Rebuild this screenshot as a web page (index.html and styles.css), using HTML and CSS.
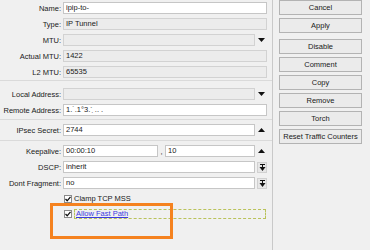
FILE: index.html
```html
<!DOCTYPE html>
<html lang="en">
<head>
    <meta charset="UTF-8">
    <title>Interface &lt;ipip-to-&gt;</title>
    <link rel="stylesheet" href="styles.css">
</head>
<body>
    <div class="window">
        <div class="form">
            <div class="section first">
                <div class="row"><span class="label">Name:</span><div class="field"><div class="box">ipip-to-</div></div></div>
                <div class="row"><span class="label">Type:</span><div class="field"><div class="box off">IP Tunnel</div></div></div>
                <div class="row"><span class="label">MTU:</span><div class="field"><div class="box off"></div><span class="ctl"><svg width="7" height="4" viewBox="0 0 7 4"><polygon points="0,0 7,0 3.5,4" fill="#111"/></svg></span></div></div>
                <div class="row"><span class="label">Actual MTU:</span><div class="field"><div class="box off">1422</div></div></div>
                <div class="row"><span class="label">L2 MTU:</span><div class="field"><div class="box off">65535</div></div></div>
            </div>
            <div class="section second">
                <div class="row"><span class="label">Local Address:</span><div class="field"><div class="box off"></div><span class="ctl"><svg width="7" height="4" viewBox="0 0 7 4"><polygon points="0,0 7,0 3.5,4" fill="#111"/></svg></span></div></div>
                <div class="row"><span class="label">Remote Address:</span><div class="field"><div class="box">1.&#729;.1&#176;3.&#180; &#803;.. .</div></div></div>
            </div>
            <div class="section third">
                <div class="row"><span class="label">IPsec Secret:</span><div class="field"><div class="box">2744</div><span class="ctl"><svg width="7" height="4" viewBox="0 0 7 4"><polygon points="0,4 7,4 3.5,0" fill="#111"/></svg></span></div></div>
            </div>
            <div class="section fourth">
                <div class="row"><span class="label">Keepalive:</span><div class="field"><div class="box short">00:00:10</div><span class="comma">,</span><div class="box">10</div><span class="ctl"><svg width="7" height="4" viewBox="0 0 7 4"><polygon points="0,4 7,4 3.5,0" fill="#111"/></svg></span></div></div>
                <div class="row"><span class="label">DSCP:</span><div class="field"><div class="box">inherit</div><span class="ctl btn"><svg width="7" height="7" viewBox="0 0 7 7"><rect x="1" y="0" width="5" height="1" fill="#111"/><rect x="3" y="1" width="1" height="3" fill="#111"/><polygon points="0.5,3 6.5,3 3.5,7" fill="#111"/></svg></span></div></div>
                <div class="row"><span class="label">Dont Fragment:</span><div class="field"><div class="box">no</div><span class="ctl btn"><svg width="7" height="7" viewBox="0 0 7 7"><rect x="1" y="0" width="5" height="1" fill="#111"/><rect x="3" y="1" width="1" height="3" fill="#111"/><polygon points="0.5,3 6.5,3 3.5,7" fill="#111"/></svg></span></div></div>
                <div class="check-row"><span class="check"><svg width="6" height="6" viewBox="0 0 6 6"><polyline points="0.5,3 2.2,4.8 5.5,0.8" fill="none" stroke="#111" stroke-width="1.3"/></svg></span><span>Clamp TCP MSS</span></div>
                <div class="check-row"><span class="check"><svg width="6" height="6" viewBox="0 0 6 6"><polyline points="0.5,3 2.2,4.8 5.5,0.8" fill="none" stroke="#111" stroke-width="1.3"/></svg></span><span class="focus"><span class="link">Allow Fast Path</span></span></div>
            </div>
            <div class="highlight"></div>
        </div>
        <div class="actions">
            <div class="button">Cancel</div>
            <div class="button">Apply</div>
            <div class="button spaced">Disable</div>
            <div class="button">Comment</div>
            <div class="button">Copy</div>
            <div class="button">Remove</div>
            <div class="button">Torch</div>
            <div class="button">Reset Traffic Counters</div>
        </div>
    </div>
</body>
</html>
```
FILE: styles.css
```css
body {
    margin: 0;
    background-color: #f0f0f0;
    font-family: "Liberation Sans", Arial, sans-serif;
    font-size: 7.5px;
    color: #1a1a1a;
}

.window {
    display: flex;
    height: 250px;
    overflow: hidden;
}

.form {
    position: relative;
    width: 272px;
    border-right: 1px solid #c9c9c9;
}

.section {
    display: flex;
    flex-direction: column;
}

.first {
    border-bottom: 1px solid #dadada;
}

.second {
    padding-top: 5px;
    padding-bottom: 1px;
    border-bottom: 1px solid #dadada;
}

.third {
    padding-top: 2px;
    padding-bottom: 2px;
    border-bottom: 1px solid #dadada;
}

.fourth {
    padding-top: 2px;
}

.row {
    display: grid;
    grid-template-columns: 61px 204px;
    column-gap: 2px;
    height: 16px;
    align-items: center;
}

.label {
    text-align: right;
    white-space: nowrap;
}

.field {
    display: flex;
    align-items: center;
}

.box {
    flex: 1;
    height: 12px;
    box-sizing: border-box;
    border: 1px solid #c6c6c6;
    background-color: #ffffff;
    padding: 0 2px;
    line-height: 10px;
    white-space: nowrap;
    overflow: hidden;
}

.box.off {
    background-color: #ececec;
    border-color: #d2d2d2;
}

.box.short {
    flex: 0 0 95px;
}

.comma {
    width: 7px;
    text-align: center;
    line-height: 12px;
    padding-top: 2px;
}

.ctl {
    width: 12px;
    height: 12px;
    display: flex;
    align-items: center;
    justify-content: center;
    margin-left: 0;
}

.ctl.btn {
    width: 10px;
    height: 11px;
    margin-left: 2px;
    box-sizing: border-box;
    border: 1px solid #d0d0d0;
    background-color: #e6e6e6;
}

.check-row {
    display: flex;
    align-items: center;
    height: 15px;
    padding-left: 64px;
}

.first-check {
    margin-top: 0;
}

.check {
    width: 8px;
    height: 8px;
    box-sizing: border-box;
    border: 1px solid #8a8a8a;
    background-color: #ffffff;
    display: flex;
    align-items: center;
    justify-content: center;
    margin-right: 2px;
}

.focus {
    width: 192px;
    height: 10px;
    box-sizing: border-box;
    border: 1px dashed #b9c25a;
    line-height: 8px;
    padding-left: 1px;
}

.link {
    color: #3a3ae0;
    text-decoration: underline;
}

.highlight {
    position: absolute;
    left: 50px;
    top: 203px;
    width: 123px;
    height: 36px;
    box-sizing: border-box;
    border: 3px solid #f5821f;
}

.actions {
    display: flex;
    flex-direction: column;
    gap: 3px;
    padding: 0 8px 0 6px;
    width: 83px;
}

.button {
    height: 15px;
    box-sizing: border-box;
    border: 1px solid #b3b3b3;
    background-color: #ebebeb;
    text-align: center;
    line-height: 13px;
    white-space: nowrap;
}

.button.spaced {
    margin-top: 3px;
}
```
